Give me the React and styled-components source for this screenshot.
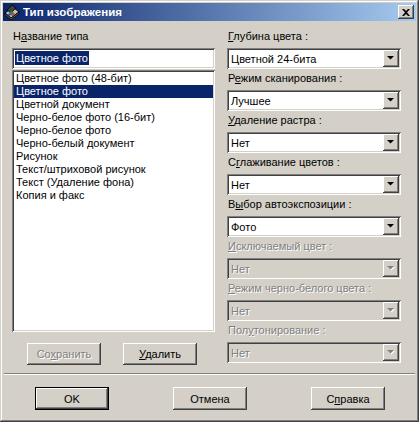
import React from 'react'
import styled, {createGlobalStyle, css} from 'styled-components'

const GlobalStyle = createGlobalStyle`
    html, body {
        margin: 0;
        padding: 0;
        background: #d4d0c8;
    }
    body {
        font-family: "Liberation Sans", Arial, sans-serif;
        font-size: 11px;
        color: #000;
    }
`

// 3D edges of the classic theme
const raised = css`
    box-shadow: inset -1px -1px #404040, inset 1px 1px #fff,
        inset -2px -2px #808080, inset 2px 2px #d4d0c8;
`
const sunken = css`
    box-shadow: inset 1px 1px #808080, inset -1px -1px #fff,
        inset 2px 2px #404040, inset -2px -2px #d4d0c8;
`

const types = [
    'Цветное фото (48-бит)',
    'Цветное фото',
    'Цветной документ',
    'Черно-белое фото (16-бит)',
    'Черно-белое фото',
    'Черно-белый документ',
    'Рисунок',
    'Текст/штриховой рисунок',
    'Текст (Удаление фона)',
    'Копия и факс',
]

const options = [
    {pre: '', key: 'Г', post: 'лубина цвета :', value: 'Цветной 24-бита'},
    {pre: 'Р', key: 'е', post: 'жим сканирования :', value: 'Лучшее'},
    {pre: '', key: 'У', post: 'даление растра :', value: 'Нет'},
    {pre: 'С', key: 'г', post: 'лаживание цветов :', value: 'Нет'},
    {pre: 'В', key: 'ы', post: 'бор автоэкспозиции :', value: 'Фото'},
    {pre: '', key: 'И', post: 'сключаемый цвет :', value: 'Нет', disabled: true},
    {pre: '', key: 'Р', post: 'ежим черно-белого цвета :', value: 'Нет', disabled: true},
    {pre: 'Пол', key: 'у', post: 'тонирование :', value: 'Нет', disabled: true},
]

function ScannerIcon() {
    return (
        <svg width="16" height="16" viewBox="0 0 16 16">
            <path d="M1 9 L9 3 L15 8 L7 14 Z" fill="#c0c0c0" stroke="#000" strokeWidth="1" />
            <path d="M1 9 L1 11 L7 16 L15 10 L15 8 L7 14 Z" fill="#606060" stroke="#000" strokeWidth="0.8" />
            <path d="M3 6 L8 1 L12 4 L7 9 Z" fill="#404040" stroke="#000" strokeWidth="0.8" />
            <path d="M5 9 L8 7 L10 9 L7 11 Z" fill="#2a8a3a" />
            <path d="M7 11 L10 9 L11 10 L8 12 Z" fill="#d03030" />
            <path d="M4 10 L6 9 L7 11 L5 12 Z" fill="#3050d0" />
        </svg>
    )
}

function Arrow({disabled}) {
    return (
        <svg width="8" height="5" viewBox="0 0 8 5">
            {disabled && <path d="M1 1 H8 L4.5 4.5 Z" fill="#fff" />}
            <path d="M0 0 H7 L3.5 3.5 Z" fill={disabled ? '#808080' : '#000'} />
        </svg>
    )
}

function Combo({value, disabled}) {
    return (
        <ComboBox $disabled={disabled}>
            <ComboText $disabled={disabled}>{value}</ComboText>
            <DropButton>
                <Arrow disabled={disabled} />
            </DropButton>
        </ComboBox>
    )
}

function App() {
    return (
        <Window>
            <GlobalStyle />
            <TitleBar>
                <ScannerIcon />
                <Title>Тип изображения</Title>
                <CloseButton>
                    <svg width="8" height="7" viewBox="0 0 8 7">
                        <path d="M0 0 H2 L4 2 L6 0 H8 L5 3.5 L8 7 H6 L4 5 L2 7 H0 L3 3.5 Z" fill="#000" />
                    </svg>
                </CloseButton>
            </TitleBar>

            <Main>
                <LeftColumn>
                    <Label>Н<u>а</u>звание типа</Label>
                    <NameInput>
                        <Selection>Цветное фото</Selection>
                    </NameInput>
                    <ListBox>
                        {types.map((t, i) => (
                            <ListItem key={t} $selected={i === 1}>{t}</ListItem>
                        ))}
                    </ListBox>
                    <ButtonRow>
                        <Button $width={74} disabled>Со<u>х</u>ранить</Button>
                        <Button $width={74}><u>У</u>далить</Button>
                    </ButtonRow>
                </LeftColumn>

                <RightColumn>
                    {options.map(o => (
                        <Field key={o.post}>
                            <Label $disabled={o.disabled}>
                                {o.pre}<u>{o.key}</u>{o.post}
                            </Label>
                            <Combo value={o.value} disabled={o.disabled} />
                        </Field>
                    ))}
                </RightColumn>
            </Main>

            <Separator />

            <Footer>
                <Button $default>OK</Button>
                <Button>Отмена</Button>
                <Button>С<u>п</u>равка</Button>
            </Footer>
        </Window>
    )
}

const Window = styled.div`
    box-sizing: border-box;
    width: 419px;
    height: 422px;
    padding: 3px;
    background: #d4d0c8;
    display: flex;
    flex-direction: column;
    box-shadow: inset -1px -1px #404040, inset 1px 1px #d4d0c8,
        inset -2px -2px #808080, inset 2px 2px #fff;
`

const TitleBar = styled.div`
    height: 18px;
    display: flex;
    align-items: center;
    padding: 0 2px 0 1px;
    background: linear-gradient(to right, #0a246a, #a6caf0);
    flex-shrink: 0;
`

const Title = styled.span`
    flex: 1;
    margin-left: 3px;
    color: #fff;
    font-family: "Liberation Sans", Arial, sans-serif;
    font-weight: bold;
    font-size: 11.5px;
    line-height: 18px;
    white-space: nowrap;
`

const CloseButton = styled.div`
    width: 16px;
    height: 14px;
    display: flex;
    align-items: center;
    justify-content: center;
    background: #d4d0c8;
    ${raised}
`

const Main = styled.div`
    display: flex;
    padding: 9px 0 0 9px;
    height: 335px;
`

const LeftColumn = styled.div`
    width: 203px;
    display: flex;
    flex-direction: column;
`

const RightColumn = styled.div`
    width: 174px;
    margin-left: 12px;
    display: flex;
    flex-direction: column;
    gap: 3px;
`

const Field = styled.div`
    display: flex;
    flex-direction: column;
`

const Label = styled.div`
    height: 13px;
    line-height: 13px;
    margin: 0 0 5px 1px;
    white-space: nowrap;
    color: ${p => (p.$disabled ? '#808080' : '#000')};
    text-shadow: ${p => (p.$disabled ? '1px 1px 0 #fff' : 'none')};
`

const NameInput = styled.div`
    box-sizing: border-box;
    height: 21px;
    padding: 3px 2px 0 3px;
    background: #fff;
    ${sunken}
`

const Selection = styled.span`
    display: inline-block;
    padding: 0 1px;
    line-height: 14px;
    background: #0a246a;
    color: #fff;
`

const ListBox = styled.div`
    box-sizing: border-box;
    height: 262px;
    margin-top: 1px;
    padding: 2px;
    background: #fff;
    ${sunken}
`

const ListItem = styled.div`
    height: 13px;
    line-height: 13px;
    padding-left: 2px;
    white-space: nowrap;
    background: ${p => (p.$selected ? '#0a246a' : 'transparent')};
    color: ${p => (p.$selected ? '#fff' : '#000')};
`

const ButtonRow = styled.div`
    display: flex;
    gap: 22px;
    margin: 11px 0 0 15px;
`

const Button = styled.button`
    box-sizing: border-box;
    width: ${p => p.$width || 74}px;
    height: ${p => (p.$width ? 22 : 23)}px;
    padding: 0;
    border: ${p => (p.$default ? '1px solid #000' : 'none')};
    background: #d4d0c8;
    font-family: inherit;
    font-size: 11px;
    color: ${p => (p.disabled ? '#808080' : '#000')};
    text-shadow: ${p => (p.disabled ? '1px 1px 0 #fff' : 'none')};
    ${raised}
`

const ComboBox = styled.div`
    box-sizing: border-box;
    height: 21px;
    display: flex;
    align-items: center;
    padding: 2px;
    background: ${p => (p.$disabled ? '#d4d0c8' : '#fff')};
    ${sunken}
`

const ComboText = styled.span`
    flex: 1;
    padding-left: 2px;
    color: ${p => (p.$disabled ? '#808080' : '#000')};
    text-shadow: ${p => (p.$disabled ? '1px 1px 0 #fff' : 'none')};
`

const DropButton = styled.div`
    width: 16px;
    height: 17px;
    display: flex;
    align-items: center;
    justify-content: center;
    background: #d4d0c8;
    ${raised}
`

const Separator = styled.div`
    margin: 8px 1px 0;
    height: 0;
    border-top: 1px solid #808080;
    border-bottom: 1px solid #fff;
`

const Footer = styled.div`
    display: flex;
    gap: 64px;
    padding: 12px 0 0 32px;
`

export default App
